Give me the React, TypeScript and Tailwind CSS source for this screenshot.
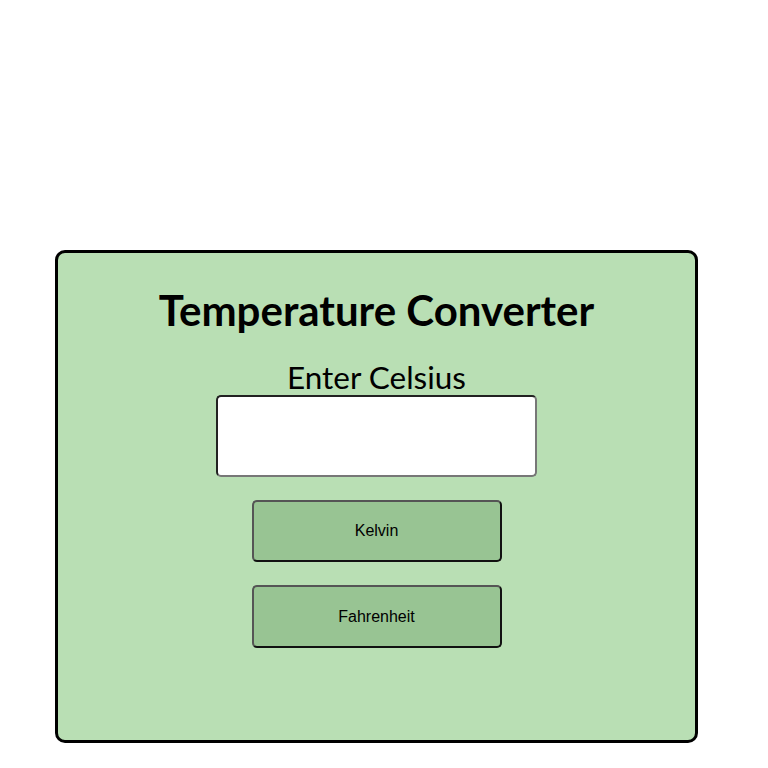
export default function App() {
  return (
    <div className="min-h-[768px] w-[768px] bg-white pt-[250px] pl-[55px]">
      <div className="flex h-[493px] w-[643px] flex-col items-center rounded-[10px] border-[3px] border-black bg-[#b9dfb4]">
        <h1 className="mt-[33px] font-['Lato',sans-serif] text-[42px] font-bold leading-[48px] text-black">
          Temperature Converter
        </h1>
        <label className="mt-[25px] font-['Lato',sans-serif] text-[31.5px] leading-[36px] text-black">
          Enter Celsius
        </label>
        <input
          type="text"
          className="mt-0 h-[82px] w-[321px] rounded-[5px] border-2 border-t-[#222] border-l-[#222] border-r-[#777] border-b-[#777] bg-white outline-none"
        />
        <button className="mt-[23px] h-[62px] w-[250px] rounded-[5px] border-2 border-t-[#555] border-l-[#555] border-r-[#111] border-b-[#111] bg-[#98c493] font-['Liberation_Sans',Arial,sans-serif] text-[16px] text-black">
          Kelvin
        </button>
        <button className="mt-[23px] h-[63px] w-[250px] rounded-[5px] border-2 border-t-[#555] border-l-[#555] border-r-[#111] border-b-[#111] bg-[#98c493] font-['Liberation_Sans',Arial,sans-serif] text-[16px] text-black">
          Fahrenheit
        </button>
      </div>
    </div>
  );
}
